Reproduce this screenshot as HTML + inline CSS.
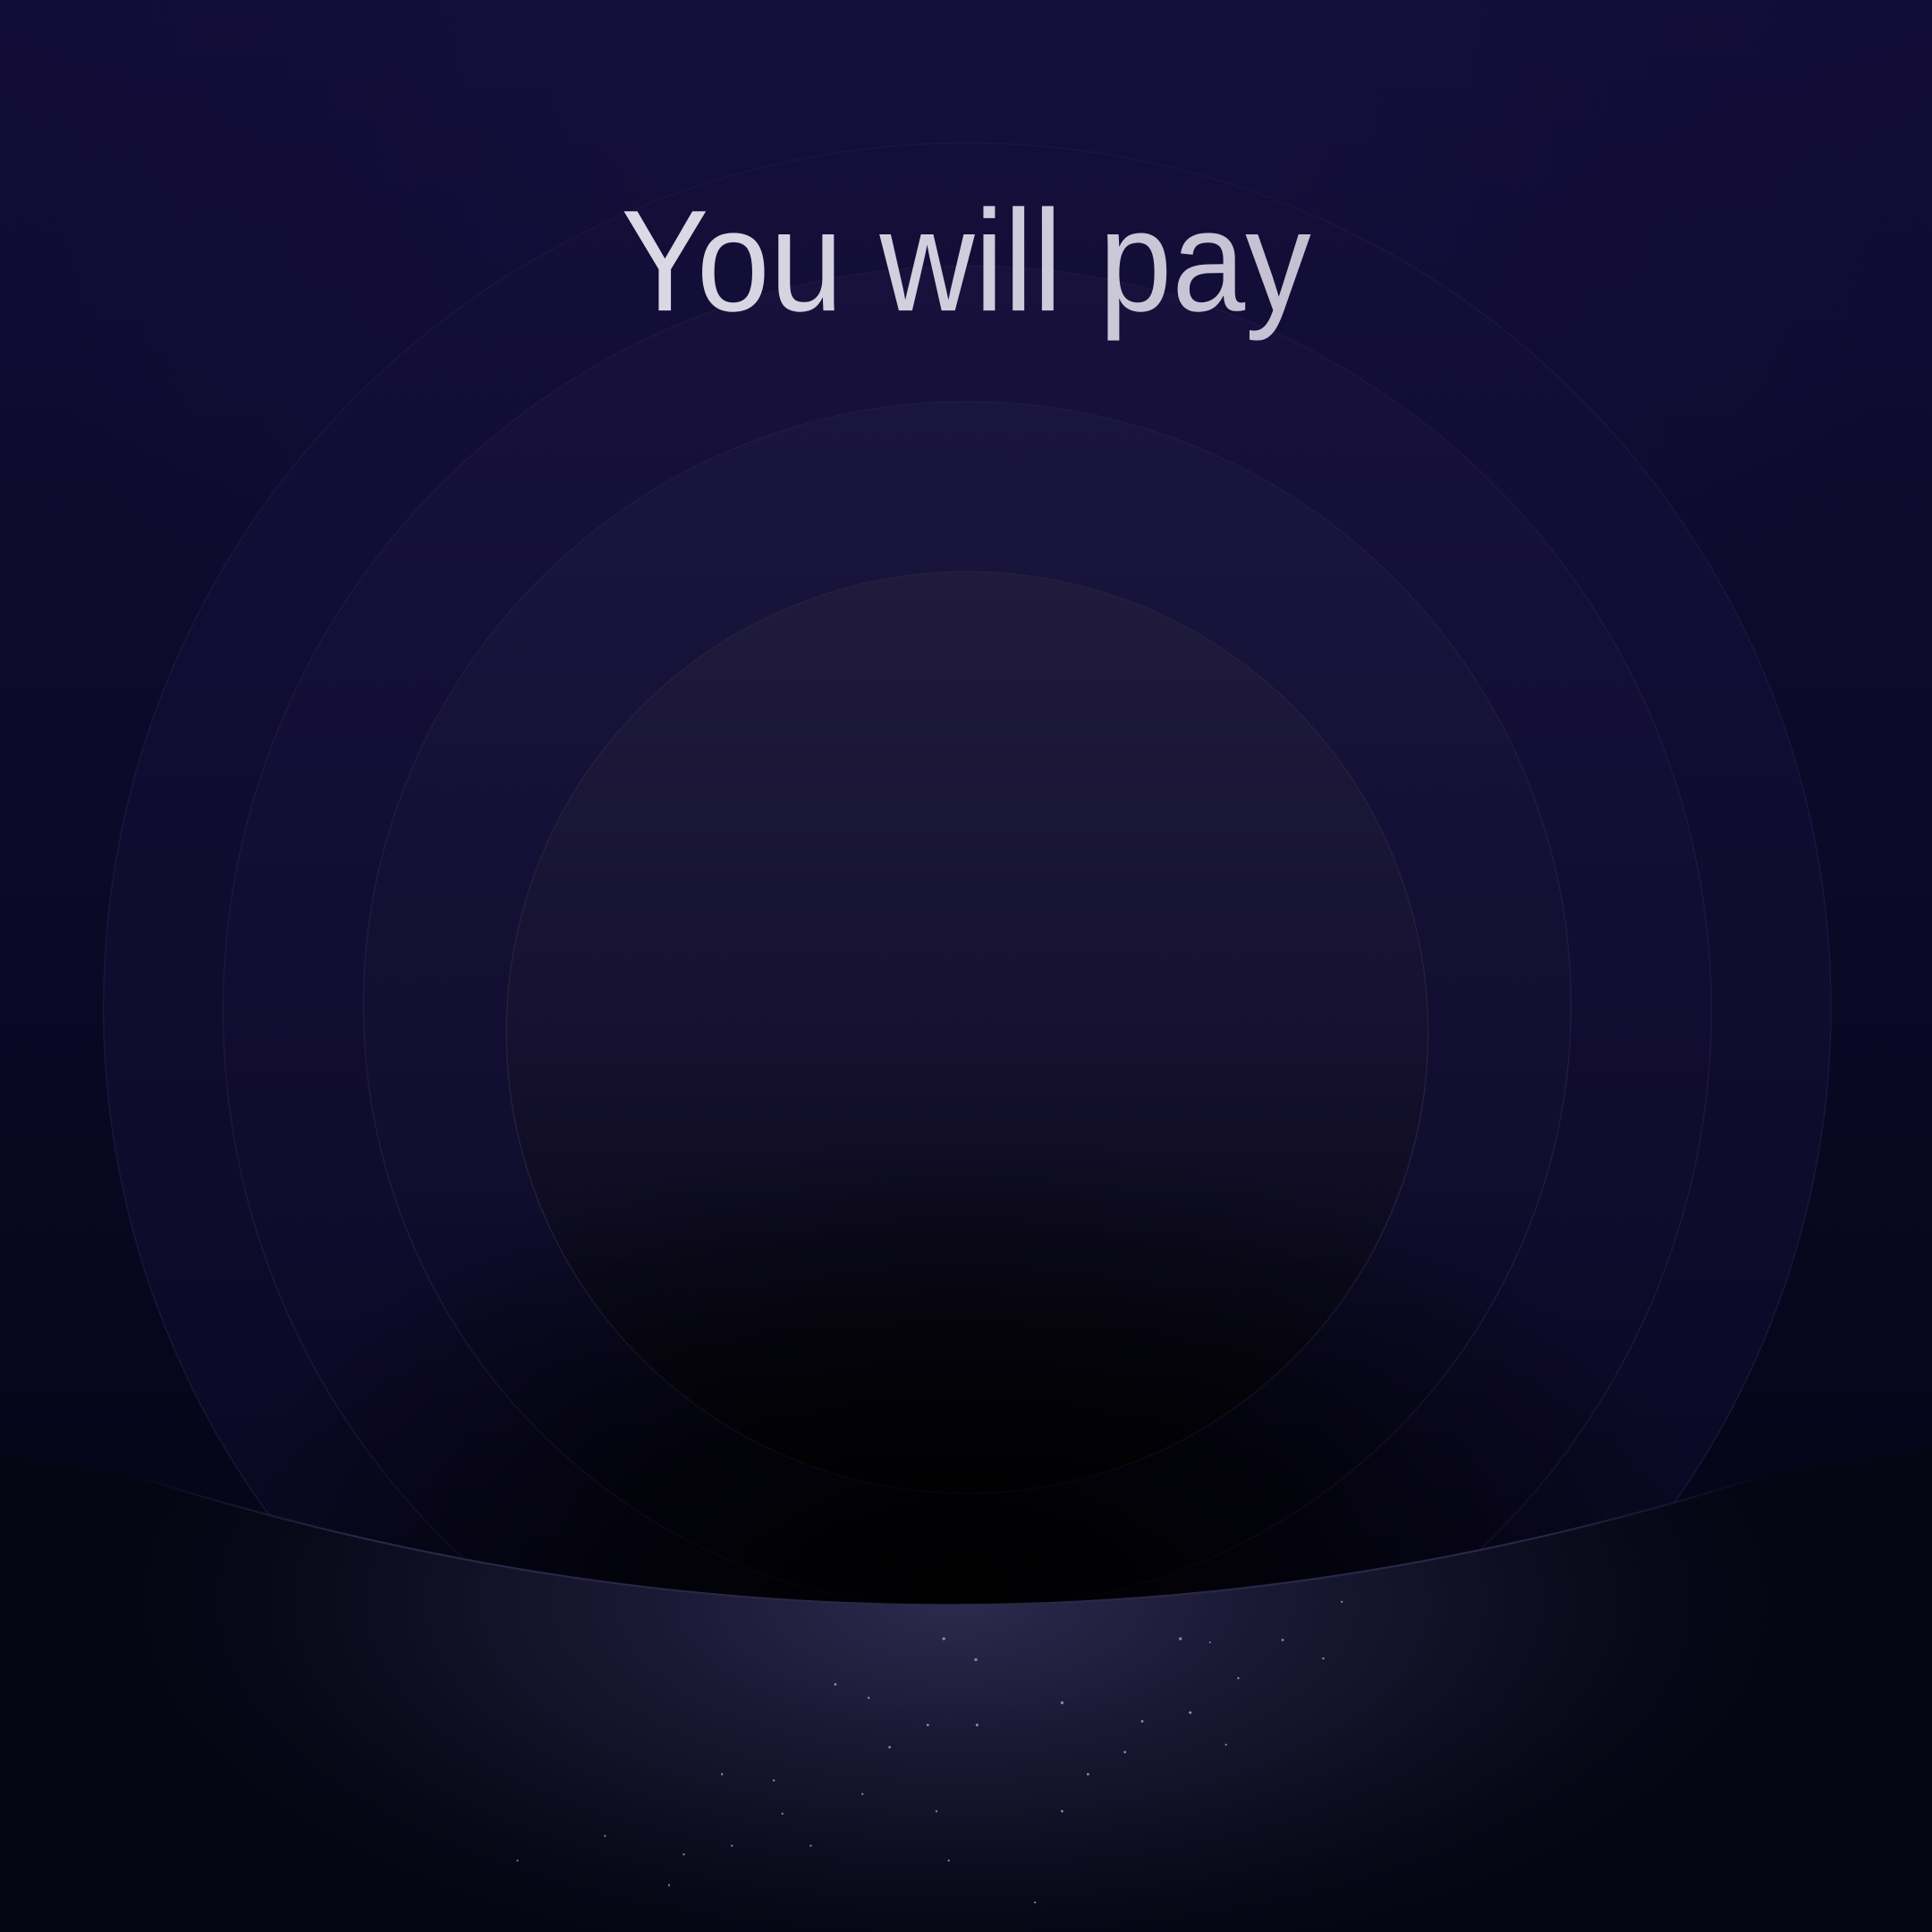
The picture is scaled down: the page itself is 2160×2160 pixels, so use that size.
<!DOCTYPE html>
<html><head><meta charset="utf-8"><style>
html,body{margin:0;padding:0;background:#07071a;}
svg{display:block;}
</style></head><body>
<svg width="2160" height="2160" viewBox="0 0 1568 1568" xmlns="http://www.w3.org/2000/svg">
<defs>
<linearGradient id="bg" x1="0" y1="0" x2="0" y2="1">
<stop offset="0" stop-color="#120c38"/>
<stop offset="0.4" stop-color="#0c0a2a"/>
<stop offset="0.75" stop-color="#05061a"/>
<stop offset="1" stop-color="#040512"/>
</linearGradient>
<radialGradient id="topglow" cx="785" cy="0" r="800" gradientUnits="userSpaceOnUse">
<stop offset="0" stop-color="#150f3c" stop-opacity="1"/>
<stop offset="1" stop-color="#150f3c" stop-opacity="0"/>
</radialGradient>
<linearGradient id="c1" x1="0" y1="0" x2="0" y2="1">
<stop offset="0" stop-color="#140e3a"/>
<stop offset="0.6" stop-color="#0e0b2c"/>
<stop offset="1" stop-color="#07061a"/>
</linearGradient>
<linearGradient id="c2" x1="0" y1="0" x2="0" y2="1">
<stop offset="0" stop-color="#17113c"/>
<stop offset="0.6" stop-color="#100c2f"/>
<stop offset="1" stop-color="#06051a"/>
</linearGradient>
<linearGradient id="c3" x1="0" y1="0" x2="0" y2="1">
<stop offset="0" stop-color="#1a153e"/>
<stop offset="0.6" stop-color="#110e30"/>
<stop offset="1" stop-color="#05051a"/>
</linearGradient>
<linearGradient id="c4" x1="0" y1="0" x2="0" y2="1">
<stop offset="0" stop-color="#201b3d"/>
<stop offset="0.5" stop-color="#15112f"/>
<stop offset="1" stop-color="#04040d"/>
</linearGradient>
<radialGradient id="dark" cx="780" cy="1290" r="620" gradientUnits="userSpaceOnUse" gradientTransform="translate(780 1290) scale(1 0.6) translate(-780 -1290)">
<stop offset="0" stop-color="#000" stop-opacity="1"/>
<stop offset="0.5" stop-color="#000" stop-opacity="0.6"/>
<stop offset="1" stop-color="#000" stop-opacity="0"/>
</radialGradient>
<radialGradient id="glow" cx="775" cy="1300" r="700" gradientUnits="userSpaceOnUse" gradientTransform="translate(775 1300) scale(1 0.45) translate(-775 -1300)">
<stop offset="0" stop-color="#2c2a4e"/>
<stop offset="0.35" stop-color="#1a1934"/>
<stop offset="0.7" stop-color="#0c0c1e"/>
<stop offset="1" stop-color="#050614" stop-opacity="0"/>
</radialGradient>
<linearGradient id="tx" x1="0" y1="0" x2="1" y2="0">
<stop offset="0" stop-color="#dcdae6"/>
<stop offset="1" stop-color="#c4c0d2"/>
</linearGradient>
<linearGradient id="arc" x1="0" y1="0" x2="1" y2="0">
<stop offset="0" stop-color="#2a2848" stop-opacity="0"/>
<stop offset="0.15" stop-color="#2a2848"/>
<stop offset="0.85" stop-color="#2a2848"/>
<stop offset="1" stop-color="#2a2848" stop-opacity="0"/>
</linearGradient>
</defs>
<rect width="1568" height="1568" fill="url(#bg)"/>
<rect width="1568" height="1568" fill="url(#topglow)"/>
<g stroke-width="1">
<circle cx="785" cy="817" r="701" fill="url(#c1)" stroke="#1b173a"/>
<circle cx="785" cy="820" r="604" fill="url(#c2)" stroke="#1d183d"/>
<circle cx="785" cy="816" r="490" fill="url(#c3)" stroke="#201b3f"/>
<circle cx="785" cy="838" r="374" fill="url(#c4)" stroke="#25203c"/>
</g>
<rect width="1568" height="1568" fill="url(#dark)"/>
<path d="M0 1180 L100 1195 Q770 1410 1440 1195 L1568 1175 L1568 1568 L0 1568 Z" fill="#050614" opacity="0.9"/>
<path d="M0 1180 L100 1195 Q770 1410 1440 1195 L1568 1175 L1568 1568 L0 1568 Z" fill="url(#glow)"/>
<path d="M100 1195 Q770 1410 1440 1195" fill="none" stroke="url(#arc)" stroke-width="1.5"/>
<g fill="#8c89a8">
<circle cx="766" cy="1330" r="1.2"/><circle cx="792" cy="1347" r="1.2"/><circle cx="678" cy="1367" r="1"/>
<circle cx="958" cy="1330" r="1.2"/><circle cx="1041" cy="1331" r="1"/><circle cx="862" cy="1382" r="1.2"/>
<circle cx="753" cy="1400" r="1"/><circle cx="793" cy="1400" r="1.1"/><circle cx="966" cy="1390" r="1.1"/>
<circle cx="913" cy="1422" r="1"/><circle cx="927" cy="1397" r="1"/><circle cx="883" cy="1440" r="1"/>
<circle cx="862" cy="1470" r="1"/><circle cx="722" cy="1418" r="1"/><circle cx="586" cy="1440" r="0.9"/>
<circle cx="628" cy="1445" r="0.9"/><circle cx="705" cy="1378" r="0.9"/><circle cx="1005" cy="1362" r="0.9"/>
<circle cx="995" cy="1416" r="0.8"/><circle cx="1074" cy="1346" r="0.9"/><circle cx="1089" cy="1300" r="0.8"/>
<circle cx="491" cy="1490" r="0.8"/><circle cx="555" cy="1505" r="0.8"/><circle cx="594" cy="1498" r="0.8"/>
<circle cx="658" cy="1498" r="0.8"/><circle cx="770" cy="1510" r="0.8"/><circle cx="543" cy="1530" r="0.8"/>
<circle cx="635" cy="1472" r="0.8"/><circle cx="700" cy="1456" r="0.8"/><circle cx="760" cy="1470" r="0.8"/>
<circle cx="840" cy="1544" r="0.8"/><circle cx="420" cy="1510" r="0.7"/><circle cx="982" cy="1333" r="0.7"/>
</g>
<text x="784" y="252" text-anchor="middle" font-family="Liberation Sans, Arial, sans-serif" font-size="117" fill="url(#tx)" textLength="560" lengthAdjust="spacingAndGlyphs">You will pay</text>
</svg>
</body></html>
